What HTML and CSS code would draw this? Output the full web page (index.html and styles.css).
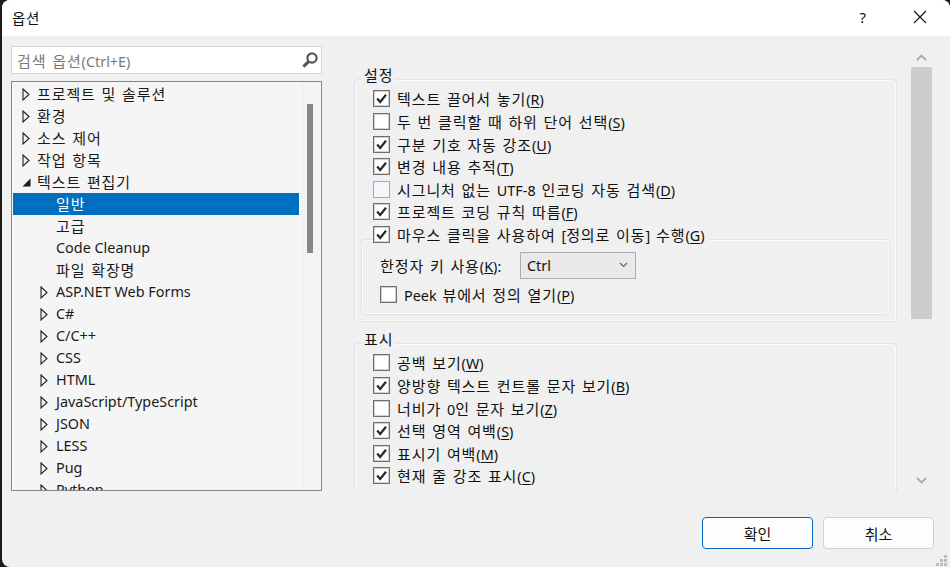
FILE: index.html
```html
<!DOCTYPE html>
<html lang="ko">
<head>
<meta charset="utf-8">
<title>옵션</title>
<link rel="stylesheet" href="styles.css">
</head>
<body>
<svg class="defs" width="0" height="0" aria-hidden="true">
  <symbol id="closed" viewBox="0 0 8 13"><path d="M1 1 L7 6.5 L1 12 Z" fill="none" stroke="#222" stroke-width="1.1"/></symbol>
  <symbol id="open" viewBox="0 0 9 9"><path d="M8.5 0.5 V8.5 H0.5 Z" fill="#1a1a1a"/></symbol>
  <symbol id="tick" viewBox="0 0 17 17"><path d="M3.6 8.6 L7 12.4 L13.6 4.2" fill="none" stroke="#2b2b2b" stroke-width="2.6"/></symbol>
</svg>
<div class="dialog">
  <header class="titlebar">
    <span class="title">옵션</span>
    <div class="title-actions">
      <span class="help">?</span>
      <svg class="close" width="14" height="14" viewBox="0 0 14 14"><path d="M1 1 L13 13 M13 1 L1 13" stroke="#111" stroke-width="1.1" fill="none"/></svg>
    </div>
  </header>
  <main class="main">
    <section class="left">
      <div class="search">
        <span class="search-text">검색 옵션<span class="en">(Ctrl+E)</span></span>
        <svg class="search-icon" width="18" height="18" viewBox="0 0 18 18"><circle cx="11" cy="7" r="4.6" fill="none" stroke="#555" stroke-width="2.2"/><path d="M7.6 10.6 L2.4 15.6" stroke="#555" stroke-width="3" fill="none"/></svg>
      </div>
      <div class="tree">
        <div class="tree-list">
          <div class="node"><svg class="arrow"><use href="#closed"/></svg>프로젝트 및 솔루션</div>
          <div class="node"><svg class="arrow"><use href="#closed"/></svg>환경</div>
          <div class="node"><svg class="arrow"><use href="#closed"/></svg>소스 제어</div>
          <div class="node"><svg class="arrow"><use href="#closed"/></svg>작업 항목</div>
          <div class="node"><svg class="arrow-open"><use href="#open"/></svg>텍스트 편집기</div>
          <div class="node leaf selected">일반</div>
          <div class="node leaf">고급</div>
          <div class="node leaf en">Code Cleanup</div>
          <div class="node leaf">파일 확장명</div>
          <div class="node sub en"><svg class="arrow"><use href="#closed"/></svg>ASP.NET Web Forms</div>
          <div class="node sub en"><svg class="arrow"><use href="#closed"/></svg>C#</div>
          <div class="node sub en"><svg class="arrow"><use href="#closed"/></svg>C/C++</div>
          <div class="node sub en"><svg class="arrow"><use href="#closed"/></svg>CSS</div>
          <div class="node sub en"><svg class="arrow"><use href="#closed"/></svg>HTML</div>
          <div class="node sub en"><svg class="arrow"><use href="#closed"/></svg>JavaScript/TypeScript</div>
          <div class="node sub en"><svg class="arrow"><use href="#closed"/></svg>JSON</div>
          <div class="node sub en"><svg class="arrow"><use href="#closed"/></svg>LESS</div>
          <div class="node sub en"><svg class="arrow"><use href="#closed"/></svg>Pug</div>
          <div class="node sub en"><svg class="arrow"><use href="#closed"/></svg>Python</div>
        </div>
        <div class="tree-scroll"><div class="tree-thumb"></div></div>
      </div>
    </section>
    <section class="panel">
      <div class="group">
        <div class="group-title">설정</div>
        <label class="row"><span class="box"><svg class="tick"><use href="#tick"/></svg></span><span>텍스트 끌어서 놓기<span class="en">(<u>R</u>)</span></span></label>
        <label class="row"><span class="box"></span><span>두 번 클릭할 때 하위 단어 선택<span class="en">(<u>S</u>)</span></span></label>
        <label class="row"><span class="box"><svg class="tick"><use href="#tick"/></svg></span><span>구분 기호 자동 강조<span class="en">(<u>U</u>)</span></span></label>
        <label class="row"><span class="box"><svg class="tick"><use href="#tick"/></svg></span><span>변경 내용 추적<span class="en">(<u>T</u>)</span></span></label>
        <label class="row"><span class="box hover"></span><span>시그니처 없는 <span class="en">UTF-8</span> 인코딩 자동 검색<span class="en">(<u>D</u>)</span></span></label>
        <label class="row"><span class="box"><svg class="tick"><use href="#tick"/></svg></span><span>프로젝트 코딩 규칙 따름<span class="en">(<u>F</u>)</span></span></label>
        <div class="nested">
          <label class="row nested-title"><span class="box"><svg class="tick"><use href="#tick"/></svg></span><span>마우스 클릭을 사용하여 <span class="en">[</span>정의로 이동<span class="en">]</span> 수행<span class="en">(<u>G</u>)</span></span></label>
          <div class="key-row">
            <span class="key-label">한정자 키 사용<span class="en">(<u>K</u>):</span></span>
            <div class="combo"><span class="en">Ctrl</span><svg width="9" height="6" viewBox="0 0 9 6"><path d="M1 1 L4.5 4.5 L8 1" fill="none" stroke="#666" stroke-width="1.2"/></svg></div>
          </div>
          <label class="row peek"><span class="box"></span><span><span class="en">Peek</span> 뷰에서 정의 열기<span class="en">(<u>P</u>)</span></span></label>
        </div>
      </div>
      <div class="group display">
        <div class="group-title">표시</div>
        <label class="row"><span class="box"></span><span>공백 보기<span class="en">(<u>W</u>)</span></span></label>
        <label class="row"><span class="box"><svg class="tick"><use href="#tick"/></svg></span><span>양방향 텍스트 컨트롤 문자 보기<span class="en">(<u>B</u>)</span></span></label>
        <label class="row"><span class="box"></span><span>너비가 <span class="en">0</span>인 문자 보기<span class="en">(<u>Z</u>)</span></span></label>
        <label class="row"><span class="box"><svg class="tick"><use href="#tick"/></svg></span><span>선택 영역 여백<span class="en">(<u>S</u>)</span></span></label>
        <label class="row"><span class="box"><svg class="tick"><use href="#tick"/></svg></span><span>표시기 여백<span class="en">(<u>M</u>)</span></span></label>
        <label class="row"><span class="box"><svg class="tick"><use href="#tick"/></svg></span><span>현재 줄 강조 표시<span class="en">(<u>C</u>)</span></span></label>
      </div>
    </section>
    <aside class="vscroll">
      <svg class="chev" width="11" height="7" viewBox="0 0 11 7"><path d="M1 6 L5.5 1.5 L10 6" fill="none" stroke="#aaa" stroke-width="1.8"/></svg>
      <div class="vthumb"></div>
      <svg class="chev down" width="11" height="7" viewBox="0 0 11 7"><path d="M1 1 L5.5 5.5 L10 1" fill="none" stroke="#aaa" stroke-width="1.8"/></svg>
    </aside>
  </main>
  <footer class="footer">
    <button class="btn primary">확인</button>
    <button class="btn">취소</button>
  </footer>
  <svg class="grip" width="15" height="12" viewBox="0 0 15 12"><g fill="#bdbdbd"><rect x="9" y="0" width="3" height="3"/><rect x="5" y="4" width="3" height="3"/><rect x="9" y="4" width="3" height="3"/><rect x="1" y="8" width="3" height="3"/><rect x="5" y="8" width="3" height="3"/><rect x="9" y="8" width="3" height="3"/></g></svg>
</div>
</body>
</html>
```
FILE: styles.css
```css
* { box-sizing: border-box; }
html, body { margin: 0; height: 100%; }
body {
  background: #1c1c1c;
  font-family: "Noto Sans", "Noto Sans CJK KR", sans-serif;
  font-size: 15px;
  letter-spacing: 0.9px;
  word-spacing: 1px;
  color: #111;
  overflow: hidden;
}
.en { font-size: 14.4px; letter-spacing: 0; word-spacing: 0; }
.defs { position: absolute; }
.dialog {
  position: relative;
  width: 948px;
  height: 567px;
  margin-left: 2px;
  background: #f0f0f0;
  border-radius: 8px 8px 0 8px;
  overflow: hidden;
  display: flex;
  flex-direction: column;
}
.titlebar {
  height: 36px;
  flex: none;
  background: #fff;
  display: flex;
  align-items: center;
  justify-content: space-between;
  padding: 0 23px 2px 10px;
}
.title { font-size: 14.5px; letter-spacing: 0.7px; }
.title-actions { display: flex; align-items: center; gap: 47px; }
.help { font-size: 15px; letter-spacing: 0; }
.main {
  flex: none;
  height: 455px;
  display: flex;
  padding: 10px 0 0 9px;
}
.left { width: 311px; flex: none; display: flex; flex-direction: column; gap: 7px; }
.search {
  height: 28px;
  flex: none;
  background: #fff;
  border: 1px solid #d4d4e0;
  display: flex;
  align-items: center;
  justify-content: space-between;
  padding: 0 2px 0 5px;
}
.search-text { color: #7a7a7a; }
.tree {
  height: 410px;
  border: 1px solid #828790;
  background: #f5f5f5;
  display: flex;
  overflow: hidden;
}
.tree-list { flex: 1; padding: 1px 0 0 1px; overflow: hidden; }
.node {
  height: 22px;
  line-height: 22px;
  display: flex;
  align-items: center;
  white-space: nowrap;
  padding-left: 9px;
  color: #1a1a1a;
}
.arrow { width: 8px; height: 13px; margin-right: 7px; flex: none; }
.arrow-open { width: 9px; height: 9px; margin-right: 6px; flex: none; }
.leaf { padding-left: 43px; }
.sub { padding-left: 27px; }
.sub .arrow { margin-right: 8px; }
.selected { background: #006fc0; color: #fff; }
.tree-scroll { width: 22px; flex: none; background: #f3f3f3; border-left: 1px solid #fafafa; padding: 22px 0 0 7px; }
.tree-thumb { width: 6px; height: 149px; background: #868686; }
.panel {
  width: 543px;
  flex: none;
  margin-left: 32px;
  padding-top: 33px;
  overflow: hidden;
}
.group {
  border: 1px solid #dde4ed;
  border-radius: 4px;
  box-shadow: 0 0 0 1px #fbfbfb inset;
  height: 243px;
  padding: 0 0 0 18px;
}
.group.display { margin-top: 21px; height: 200px; border-bottom: 0; }
.group-title {
  width: fit-content;
  margin: -15px 0 2.7px -12px;
  padding: 0 3px;
  line-height: 20px;
  background: #f0f0f0;
}
.row {
  height: 22.6px;
  display: flex;
  align-items: center;
  gap: 7px;
  white-space: nowrap;
}
.row u { text-underline-offset: 2px; }
.box {
  width: 17px;
  height: 17px;
  flex: none;
  background: #fff;
  border: 1px solid #6e6e6e;
  box-shadow: 0 0 0 1px #d0d0d0 inset;
  display: block;
}
.box.hover { background: #f3f7fd; border-color: #7fb0e6; box-shadow: none; }
.tick { width: 15px; height: 15px; display: block; }
.nested {
  margin: 15.7px 6px 0 -12px;
  height: 76px;
  border: 1px solid #dde4ed;
  border-radius: 4px;
  box-shadow: 0 0 0 1px #fbfbfb inset;
}
.nested-title {
  width: fit-content;
  margin: -16.7px 0 0 11px;
  padding-right: 3px;
  background: #f0f0f0;
}
.key-row { display: flex; align-items: center; margin: 6px 0 0 18px; }
.key-label { width: 140px; flex: none; }
.combo {
  width: 116px;
  height: 27px;
  background: #e9e9e9;
  border: 1px solid #adadad;
  display: flex;
  align-items: center;
  justify-content: space-between;
  padding: 0 7px 0 6px;
}
.peek { margin: 7px 0 0 18px; height: 18px; }
.vscroll {
  width: 21px;
  flex: none;
  margin-left: 14px;
  display: flex;
  flex-direction: column;
  align-items: center;
}
.chev { flex: none; margin: 8px 0 6px; }
.chev.down { margin: 0; margin-top: auto; margin-bottom: 7px; }
.vthumb { width: 21px; height: 252px; background: #cdcdcd; flex: none; }
.footer {
  flex: 1;
  display: flex;
  justify-content: flex-end;
  gap: 10px;
  padding: 26px 16px 0 0;
}
.btn {
  width: 111px;
  height: 32px;
  background: #fdfdfd;
  border: 1px solid #d0d0d0;
  border-radius: 4px;
  font: inherit;
  letter-spacing: 0;
  color: #111;
}
.btn.primary { border-color: #0067c0; }
.grip { position: absolute; right: 0; bottom: 0; }
```
